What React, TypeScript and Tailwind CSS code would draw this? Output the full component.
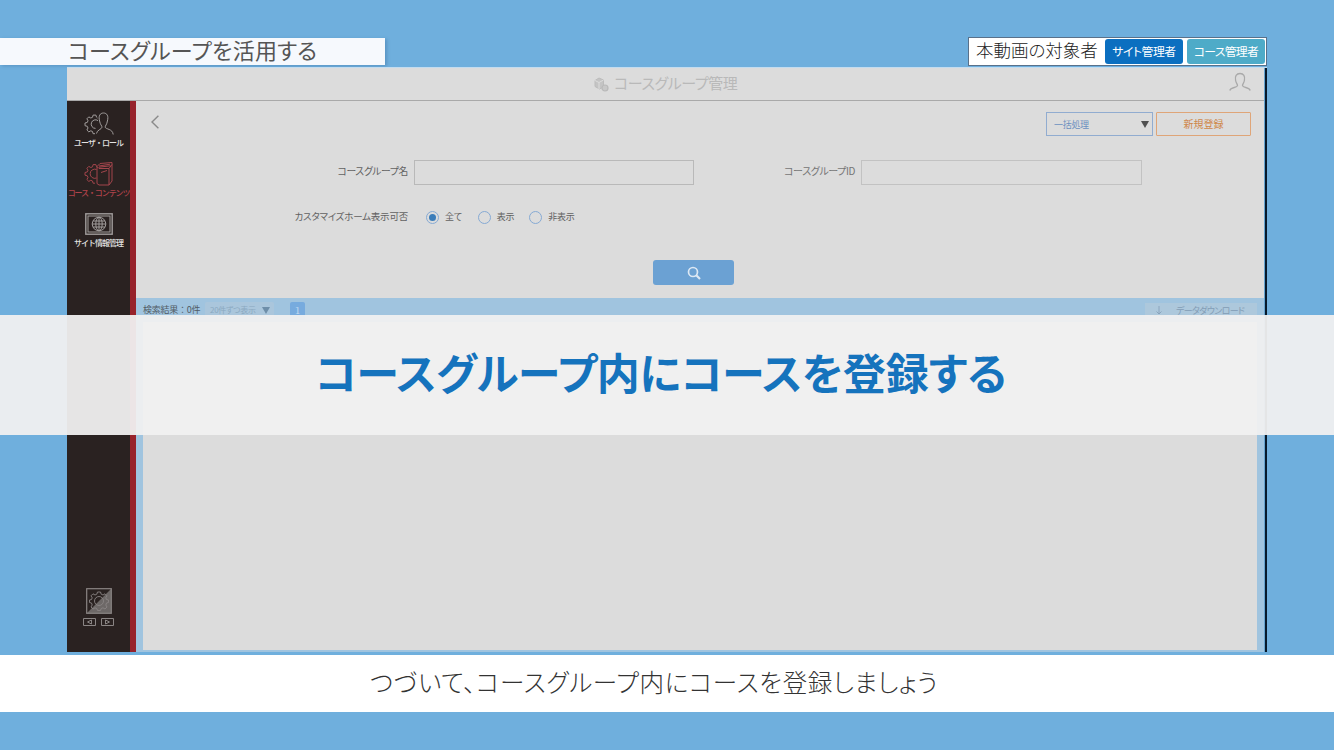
import React from 'react';
import clsx from 'clsx';

const navItems = [
  { id: 'user', label: 'ユーザ・ロール', active: false },
  { id: 'course', label: 'コース・コンテンツ', active: true },
  { id: 'site', label: 'サイト情報管理', active: false },
];

// Left part of a cog, the right side is hidden by the figure in front of it
const GEAR =
  'M14.5 5.5 L13.5 4.6 L12.9 2.6 H10.1 L9.5 4.8 L7.8 5.5 L5.8 4.4 L3.9 6.3 L5 8.2 L4.3 9.9 L2 10.500 V13.200 L4.300 13.800 L5 15.500 L3.900 17.500 L5.800 19.400 L7.800 18.300 L9.500 19 L10.100 21.200 H12';

function UserGearIcon() {
  return (
    <svg className="h-[24px] w-[30px]" viewBox="0 0 30 24" fill="none" stroke="currentColor" strokeWidth="1">
      <path d={GEAR} transform="translate(-1 0.5)" />
      <path d="M14 8.6 A4.3 4.3 0 1 0 11.5 16.4" />
      <path d="M12.500 21.500 C12.800 18 17.500 17.500 18 15.200 C18.200 14 16 12.500 15.600 9 C14.200 4 16 1 19.500 1 C23 1 24.800 4 23.400 9 C23 12.500 20.900 14 21.200 15.200 C21.800 17.500 28.500 16.500 29.200 22.500" />
    </svg>
  );
}

function CourseGearIcon() {
  return (
    <svg className="h-[26px] w-[30px]" viewBox="0 0 30 26" fill="none" stroke="currentColor" strokeWidth="1">
      <path d={GEAR} transform="translate(-1 1)" />
      <path d="M12.500 8.500 A4.600 4.600 0 1 0 12.500 17" />
      <path d="M13 5.500 L16 2.500 L28 1.500 V20 L25 24 H15 L13 22.500 Z M13 5.500 L15 7.500 H25 V24 M25 7.500 L28 3.500 M15 5 L26 3.200 M15 6.200 L26.500 4.800 M17 11.500 L23 9.500" />
    </svg>
  );
}

function SiteIcon() {
  return (
    <svg className="h-[22px] w-[28px]" viewBox="0 0 28 22" fill="none" stroke="currentColor" strokeWidth="1">
      <rect x="0.8" y="0.8" width="26.4" height="20.4" strokeWidth="1.4" />
      <rect x="3" y="3" width="22" height="16" />
      <circle cx="14" cy="11" r="6.8" />
      <ellipse cx="14" cy="11" rx="3.2" ry="6.8" />
      <path d="M14 4.2 V17.8 M7.2 11 H20.8 M8 8 H20 M8 14 H20" />
    </svg>
  );
}

function NavIcon({ id }: { id: string }) {
  if (id === 'user') return <UserGearIcon />;
  if (id === 'course') return <CourseGearIcon />;
  return <SiteIcon />;
}

function Sidebar() {
  return (
    <nav className="flex w-[69px] shrink-0 flex-col border-r-[6px] border-[#97222b] bg-[#2a2221] pt-[10px]">
      {navItems.map((item) => (
        <div
          key={item.id}
          className={clsx(
            'flex h-[50px] flex-col items-center',
            item.active ? 'text-[#a3454c]' : 'text-[#a19d9c]'
          )}
        >
          <div className="flex h-[26px] items-center">
            <NavIcon id={item.id} />
          </div>
          <span
            className={clsx(
              'mt-px text-[8px] leading-[10px] font-medium whitespace-nowrap [font-feature-settings:normal]',
              item.active ? 'tracking-[-1.1px] text-[#b0434b]' : 'tracking-[-1px] text-[#e4e2e2]'
            )}
          >
            {item.label}
          </span>
        </div>
      ))}

      {/* Display toggle */}
      <div className="mt-auto mb-[26px] flex flex-col items-center text-[#8a8584]">
        <svg className="h-[26px] w-[26px]" viewBox="0 0 26 26" fill="none" stroke="currentColor">
          <path d="M25 1 V25 H1 Z" fill="#6d6867" stroke="none" />
          <rect x="0.7" y="0.7" width="24.6" height="24.6" strokeWidth="1.2" />
          <path
            d="M11.5 4 H14.5 L15.2 6.2 L17 7 L19 5.8 L21 7.8 L19.8 9.8 L20.5 11.5 L22.5 12 V14.5 L20.5 15 L19.8 17 L21 19 L19 21 L17 19.8 L15.2 20.5 L14.5 22.5 H11.5 L10.8 20.5 L9 19.8 L7 21 L5 19 L6.2 17 L5.5 15 L3.5 14.5 V12 L5.5 11.5 L6.2 9.8 L5 7.8 L7 5.8 L9 7 L10.8 6.2 Z"
            strokeWidth="0.9"
          />
          <circle cx="13" cy="13" r="4.5" strokeWidth="0.9" />
        </svg>
        <div className="mt-[4px] flex gap-[5px]">
          <svg className="h-[8px] w-[13px]" viewBox="0 0 13 8" fill="none" stroke="currentColor">
            <path d="M.5 .5 H12.5 V7.5 H.5 Z M8.5 2 L4.5 4 L8.5 6 Z" />
          </svg>
          <svg className="h-[8px] w-[13px]" viewBox="0 0 13 8" fill="none" stroke="currentColor">
            <path d="M.5 .5 H12.5 V7.5 H.5 Z M4.5 2 L8.5 4 L4.5 6 Z" />
          </svg>
        </div>
      </div>
    </nav>
  );
}

function Radio({ label, checked, className }: { label: string; checked?: boolean; className?: string }) {
  return (
    <label className={clsx('flex items-center', className)}>
      <span className="flex size-[13px] items-center justify-center rounded-full border border-[#86aad4]">
        {checked && <span className="size-[7px] rounded-full bg-[#3c7db9]" />}
      </span>
      <span className="ml-[6px] text-[9px] leading-[14px] tracking-[-0.25px] whitespace-nowrap text-[#616161]">
        {label}
      </span>
    </label>
  );
}

function SearchForm() {
  return (
    <section className="flex h-[197px] shrink-0 flex-col bg-[#dcdcdc]">
      <div className="flex items-start justify-between pt-[11px] pr-[13px] pl-[15px]">
        <svg className="mt-[3px] h-[14px] w-[8px]" viewBox="0 0 8 14" fill="none" stroke="#8a8a8a" strokeWidth="1.4">
          <path d="M7.4 .8 L1 7 L7.4 13.2" />
        </svg>
        <div className="flex gap-[3px]">
          <div className="flex h-[24px] w-[107px] items-center justify-between border border-[#91acd0] pr-[3px] pl-[7px]">
            <span className="mt-px text-[9px] tracking-[-0.3px] text-[#6a8fc0]">一括処理</span>
            <svg className="h-[7px] w-[8px]" viewBox="0 0 8 7">
              <path d="M0 0 H8 L4 7 Z" fill="#505050" />
            </svg>
          </div>
          <button className="h-[24px] w-[95px] rounded-[1px] border border-[#dfa578] text-[10px] leading-[20px] text-[#cf8648]">
            新規登録
          </button>
        </div>
      </div>

      <div className="mt-[24px] flex h-[25px] items-center text-[10px] leading-[20px] text-[#616161]">
        <span className="mb-[3px] w-[272px] text-right text-[9.8px] tracking-[-0.35px] whitespace-nowrap">
          コースグループ名
        </span>
        <div className="ml-[6px] h-full w-[280px] border border-[#b9b9b9]" />
        <span className="mb-[3px] w-[161px] text-right tracking-[-0.4px] whitespace-nowrap text-[#757575]">
          コースグループID
        </span>
        <div className="ml-[6px] h-full w-[281px] border border-[#c2c2c2]" />
      </div>

      <div className="mt-[24px] flex h-[16px] items-center">
        <span className="mb-px w-[272px] text-right text-[9.5px] tracking-[-0.2px] whitespace-nowrap text-[#616161]">
          カスタマイズホーム表示可否
        </span>
        <Radio label="全て" checked className="ml-[18px]" />
        <Radio label="表示" className="ml-[16px]" />
        <Radio label="非表示" className="ml-[15px]" />
      </div>

      <button className="mt-[35px] ml-[517px] flex h-[25px] w-[81px] items-center justify-center rounded-[3px] bg-[#6ba1d3]">
        <svg className="h-[14px] w-[14px]" viewBox="0 0 14 14" fill="none" stroke="#dce8f4">
          <circle cx="6" cy="6" r="4.5" strokeWidth="1.7" />
          <path d="M9.3 9.3 L13 13" strokeWidth="2.2" />
        </svg>
      </button>
    </section>
  );
}

function Results() {
  return (
    <section className="flex flex-1 flex-col bg-[#a0c4df]">
      <div className="flex h-[24px] shrink-0 items-center pl-[7px] text-[9px]">
        <span className="w-[60px] tracking-[-0.25px] whitespace-nowrap text-[#525c66] [font-feature-settings:normal]">
          検索結果：0件
        </span>
        <div className="ml-[2px] flex h-[16px] w-[69px] items-center justify-between rounded-[2px] bg-[#aac6dc] pr-[4px] pl-[5px]">
          <span className="text-[8px] tracking-[-0.3px] whitespace-nowrap text-[#8ba9c1]">20件ずつ表示</span>
          <svg className="h-[7px] w-[8px] shrink-0" viewBox="0 0 8 7">
            <path d="M0 0 H8 L4 7 Z" fill="#6e8ea9" />
          </svg>
        </div>
        <span className="mt-[2px] ml-[16px] flex h-[18px] w-[15px] items-center justify-center rounded-[2px] bg-[#77abde] font-serif text-[11px] text-[#bcd7ef]">
          1
        </span>
        <div className="mt-[2px] mr-[7px] ml-auto flex h-[16px] w-[112px] items-center bg-[#adc8dc] pl-[9px] text-[#839db6]">
          <svg className="h-[10px] w-[10px]" viewBox="0 0 10 10" fill="none" stroke="currentColor" strokeWidth="0.8">
            <path d="M5 0 V8 M2.5 5.5 L5 8 L7.5 5.5 M0 9.5 H10" />
          </svg>
          <span className="mb-px ml-[12px] text-[9px] tracking-[-0.65px] whitespace-nowrap">データダウンロード</span>
        </div>
      </div>
      <div className="mr-[7px] mb-[2px] ml-[7px] flex-1 bg-[#dcdcdc]" />
    </section>
  );
}

function ManagementWindow() {
  return (
    <div className="ml-[67px] flex h-[585px] w-[1200px] border-t border-[#c3dcef]">
      <div className="flex flex-1 flex-col">
        <header className="flex h-[33px] shrink-0 items-center border-b border-[#a9a9a9] bg-[#dcdcdc]">
          <div className="ml-[527px] flex items-center text-[#b9b9b9]">
            <svg className="h-[15px] w-[15px]" viewBox="0 0 15 15" fill="none" stroke="currentColor">
              <path d="M1 3.5 L5 1 L9.5 3 V10 L5.5 12 L1 9.5 Z" fill="#c4c4c4" stroke="#bcbcbc" />
              <path d="M1 3.5 L5 5.5 L9.5 3 M5 5.5 V12" stroke="#dcdcdc" />
              <circle cx="11" cy="11" r="3" fill="#c8c8c8" strokeWidth="1.2" />
            </svg>
            <h1 className="mb-[2px] ml-[5px] text-[15px] leading-[28px] tracking-[-0.4px] whitespace-nowrap">
              コースグループ管理
            </h1>
          </div>
          <svg
            className="mr-[13px] mb-[5px] ml-auto h-[20px] w-[22px]"
            viewBox="0 0 22 20"
            fill="none"
            stroke="#a9a9a9"
            strokeWidth="1.3"
          >
            <path d="M.8 18.5 C1.5 15 8 16 8.5 13.6 C8.6 12.4 7 11 6.6 8.5 C5.6 4 7.5 1.500 11 1.500 C14.500 1.500 16.400 4 15.400 8.500 C15 11 13.400 12.400 13.500 13.600 C14 16 20.500 15 21.200 18.500" />
          </svg>
        </header>
        <div className="flex flex-1">
          <Sidebar />
          <main className="flex flex-1 flex-col">
            <SearchForm />
            <Results />
          </main>
        </div>
      </div>
      <div className="w-[3px] border-r-2 border-[#06192b] bg-[#66a3cf]" />
    </div>
  );
}

export default function App() {
  return (
    <div className="relative flex h-[750px] w-[1334px] flex-col overflow-hidden bg-[#6fafdd] pt-[37px] font-['Noto_Sans_CJK_JP',sans-serif] [font-feature-settings:'palt']">
      {/* Chapter title and audience */}
      <div className="flex h-[30px] shrink-0 items-start justify-between pr-[67px]">
        <div className="mt-px flex h-[27px] w-[385px] items-start bg-[#f6f9fd] pl-[68px] shadow-[2px_1px_3px_rgba(50,100,150,0.35)]">
          <span className="text-[22px] leading-[23px] tracking-[0.25px] whitespace-nowrap text-[#555]">
            コースグループを活用する
          </span>
        </div>
        <div className="flex h-[29px] w-[299px] items-center border border-[#59718a] bg-white pl-[7px]">
          <span className="mb-[3px] w-[122px] text-[17.5px] leading-[24px] font-light whitespace-nowrap text-[#222]">
            本動画の対象者
          </span>
          <span className="ml-[7px] h-[25px] w-[78px] rounded-[3px] bg-[#0b6fc0] text-center text-[11.8px] leading-[23px] tracking-[-0.45px] whitespace-nowrap text-white">
            サイト管理者
          </span>
          <span className="ml-[4px] h-[25px] w-[78px] rounded-[3px] bg-[#4eabc8] text-center text-[11.8px] leading-[23px] tracking-[-0.65px] whitespace-nowrap text-white">
            コース管理者
          </span>
        </div>
      </div>

      <ManagementWindow />

      {/* Subtitle */}
      <div className="mt-[3px] flex h-[57px] shrink-0 items-start bg-white pl-[370px]">
        <p className="text-[24.5px] leading-[54px] font-light tracking-[0.7px] whitespace-nowrap text-[#333]">
          つづいて、コースグループ内にコースを登録しましょう
        </p>
      </div>

      {/* Section title over the dimmed window */}
      <div className="absolute inset-x-0 top-[315px] flex h-[120px] items-start bg-[#f0f0f0]/95 pl-[315px]">
        <h2 className="text-[43px] leading-[112px] font-bold tracking-[-0.25px] whitespace-nowrap text-[#1573bd]">
          コースグループ内にコースを登録する
        </h2>
      </div>
    </div>
  );
}
